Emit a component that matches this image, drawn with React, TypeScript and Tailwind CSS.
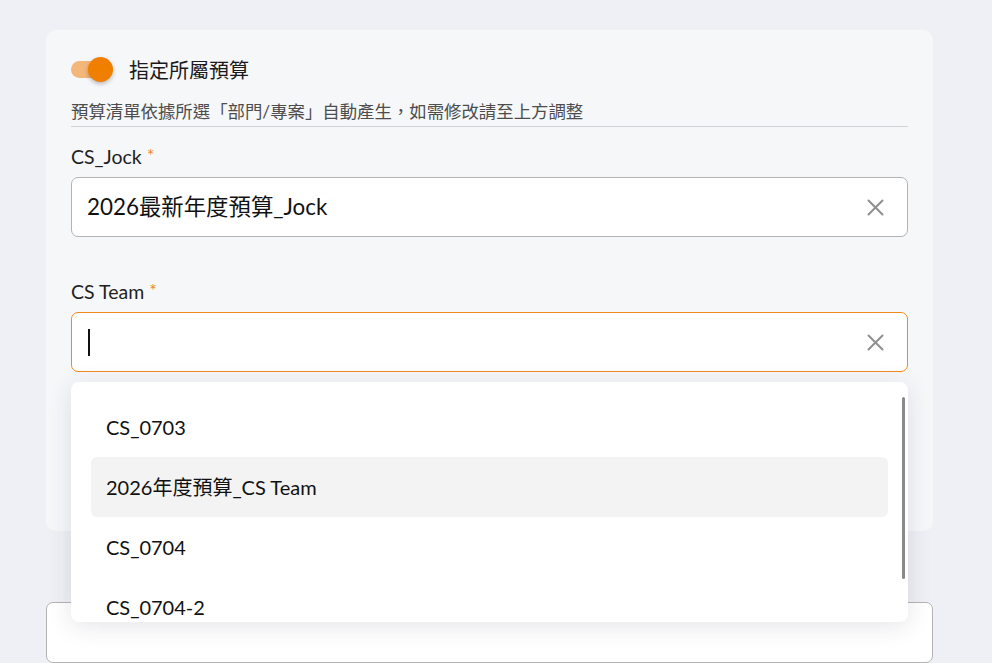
import React from "react";

const FONT = 'Lato, "Noto Sans CJK TC", "Noto Sans", sans-serif';

function ClearIcon() {
  return (
    <svg width="17" height="17" viewBox="0 0 17 17" className="shrink-0">
      <path d="M1.5 1.5 L15.5 15.5 M15.5 1.5 L1.5 15.5" stroke="#8f8f8f" strokeWidth="2" strokeLinecap="round" />
    </svg>
  );
}

function Label({ text }: { text: string }) {
  return (
    <div className="h-[24px] flex items-center text-[19.5px] text-[#1f1f1f] leading-none">
      <span>{text}</span>
      <span className="ml-[5px] text-[#f08a1f] text-[18px] relative -top-[2px]">*</span>
    </div>
  );
}

const OPTIONS = ["CS_0703", "2026年度預算_CS Team", "CS_0704", "CS_0704-2"];

export default function App() {
  return (
    <div className="w-[992px] h-[663px] overflow-hidden bg-[#eff0f5] pl-[46px] pt-[30px]" style={{ fontFamily: FONT }}>
      <div className="w-[887px] h-[501px] bg-[#f6f7f9] rounded-[10px] px-[25px] pt-[27px]">
        {/* switch + title */}
        <div className="flex items-center h-[25px]">
          <div className="relative w-[42px] h-[25px]">
            <div className="absolute left-0 top-[4px] w-[36px] h-[17px] rounded-full bg-[#f4b77a]" />
            <div className="absolute left-[17px] top-0 w-[25px] h-[25px] rounded-full bg-[#f07f00] shadow-[0_2px_4px_rgba(0,0,0,0.25)]" />
          </div>
          <span className="ml-[16px] text-[20px] text-[#1a1a1a] leading-none">指定所屬預算</span>
        </div>

        {/* helper */}
        <div className="mt-[16px] h-[29px] flex items-center border-b border-[#d2d3d6] text-[17.4px] text-[#4d4d4d] leading-none">
          預算清單依據所選「部門/專案」自動產生，如需修改請至上方調整
        </div>

        <div className="mt-[18px]">
          <Label text="CS_Jock" />
        </div>
        <div className="mt-[8px] h-[60px] bg-white border border-[#b3b3b3] rounded-[7px] flex items-center pl-[15px] pr-[23px]">
          <span className="flex-1 text-[22.4px] text-[#111] leading-none">2026最新年度預算_Jock</span>
          <ClearIcon />
        </div>

        <div className="mt-[43px]">
          <Label text="CS Team" />
        </div>
        <div className="relative mt-[8px]">
          <div className="h-[60px] bg-white border border-[#f08a1f] rounded-[7px] flex items-center pl-[16px] pr-[23px]">
            <div className="flex-1 flex items-center">
              <div className="w-[1.5px] h-[27px] bg-[#111]" />
            </div>
            <ClearIcon />
          </div>

          {/* options popover */}
          <div className="absolute z-10 left-0 right-0 top-[70px] h-[240px] bg-white rounded-[8px] shadow-[0_4px_24px_rgba(40,45,70,0.12)] overflow-hidden">
            <div className="px-[20px] pt-[15px]">
              {OPTIONS.map((o, i) => (
                <div
                  key={o}
                  className={
                    i === 1
                      ? "h-[60px] flex items-center pl-[15px] rounded-[6px] bg-[#f3f3f3] text-[20px] text-[#111]"
                      : "h-[60px] flex items-center pl-[15px] rounded-[6px] text-[20px] text-[#111]"
                  }
                >
                  {o}
                </div>
              ))}
            </div>
            <div className="absolute right-[3px] top-[15px] w-[3px] h-[182px] rounded-full bg-[#8a8a8a]" />
          </div>
        </div>
      </div>

      <div className="mt-[71px] w-[887px] h-[61px] bg-white border border-[#b3b3b3] rounded-[7px]" />
    </div>
  );
}
